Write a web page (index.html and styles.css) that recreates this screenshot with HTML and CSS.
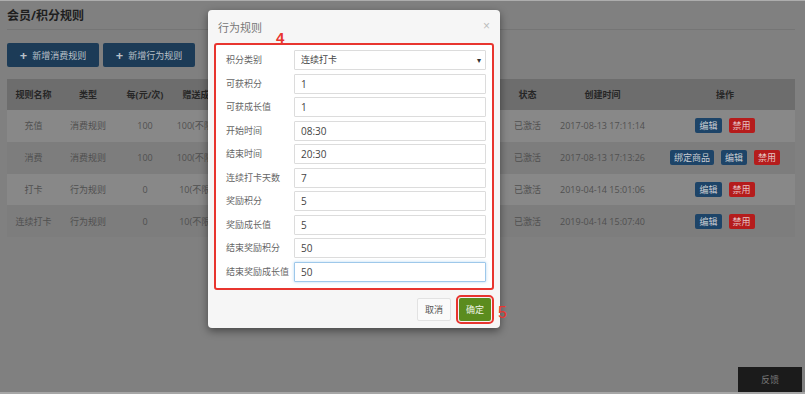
FILE: index.html
```html
<!DOCTYPE html>
<html lang="zh-CN">
<head>
    <meta charset="UTF-8">
    <meta name="viewport" content="width=device-width, initial-scale=1.0">
    <title>会员/积分规则</title>
    <link rel="stylesheet" href="styles.css">
</head>
<body>

    <!-- page behind the modal, drawn in its dimmed colours -->
    <div class="page">
        <h1 class="page-title">会员/积分规则</h1>

        <div class="toolbar">
            <button class="btn-add"><span class="plus">+</span>新增消费规则</button>
            <button class="btn-add"><span class="plus">+</span>新增行为规则</button>
        </div>

        <table class="rules">
            <colgroup>
                <col class="c-name"><col class="c-type"><col class="c-per"><col class="c-grow">
                <col class="c-points"><col class="c-desc"><col class="c-state"><col class="c-time"><col class="c-ops">
            </colgroup>
            <thead>
                <tr>
                    <th>规则名称</th><th>类型</th><th>每(元/次)</th><th>赠送成长值</th>
                    <th>赠送积分</th><th>描述</th><th>状态</th><th>创建时间</th><th>操作</th>
                </tr>
            </thead>
            <tbody>
                <tr>
                    <td>充值</td><td>消费规则</td><td>100</td><td>100(不限次数)</td><td>100</td><td></td>
                    <td>已激活</td><td>2017-08-13 17:11:14</td>
                    <td><div class="ops"><span class="tag tag-blue">编辑</span><span class="tag tag-red">禁用</span></div></td>
                </tr>
                <tr>
                    <td>消费</td><td>消费规则</td><td>100</td><td>100(不限次数)</td><td>100</td><td></td>
                    <td>已激活</td><td>2017-08-13 17:13:26</td>
                    <td><div class="ops"><span class="tag tag-blue">绑定商品</span><span class="tag tag-blue">编辑</span><span class="tag tag-red">禁用</span></div></td>
                </tr>
                <tr>
                    <td>打卡</td><td>行为规则</td><td>0</td><td>10(不限次数)</td><td>10</td><td></td>
                    <td>已激活</td><td>2019-04-14 15:01:06</td>
                    <td><div class="ops"><span class="tag tag-blue">编辑</span><span class="tag tag-red">禁用</span></div></td>
                </tr>
                <tr>
                    <td>连续打卡</td><td>行为规则</td><td>0</td><td>10(不限次数)</td><td>10</td><td></td>
                    <td>已激活</td><td>2019-04-14 15:07:40</td>
                    <td><div class="ops"><span class="tag tag-blue">编辑</span><span class="tag tag-red">禁用</span></div></td>
                </tr>
            </tbody>
        </table>
    </div>

    <div class="feedback">反馈</div>

    <!-- 行为规则 modal -->
    <div class="modal">
        <div class="modal-header">
            <span class="modal-title">行为规则</span>
            <span class="modal-close">×</span>
        </div>
        <span class="mark mark-4">4</span>

        <form class="rule-form">
            <div class="form-row">
                <label>积分类别</label>
                <div class="select-box">连续打卡</div>
            </div>
            <div class="form-row">
                <label>可获积分</label>
                <input type="text" value="1">
            </div>
            <div class="form-row">
                <label>可获成长值</label>
                <input type="text" value="1">
            </div>
            <div class="form-row">
                <label>开始时间</label>
                <input type="text" value="08:30">
            </div>
            <div class="form-row">
                <label>结束时间</label>
                <input type="text" value="20:30">
            </div>
            <div class="form-row">
                <label>连续打卡天数</label>
                <input type="text" value="7">
            </div>
            <div class="form-row">
                <label>奖励积分</label>
                <input type="text" value="5">
            </div>
            <div class="form-row">
                <label>奖励成长值</label>
                <input type="text" value="5">
            </div>
            <div class="form-row">
                <label>结束奖励积分</label>
                <input type="text" value="50">
            </div>
            <div class="form-row">
                <label>结束奖励成长值</label>
                <input type="text" class="focused" value="50">
            </div>
        </form>

        <div class="modal-footer">
            <button class="btn-cancel">取消</button>
            <button class="btn-ok">确定</button>
            <span class="mark mark-5">5</span>
        </div>
    </div>

</body>
</html>
```

FILE: styles.css
```css
body {
    margin: 0;
    min-height: 100vh;
    box-sizing: border-box;
    background-color: #808080;
    border-top: 1px solid #adadad;
    border-bottom: 2px solid #a6a6a6;
    font-family: "Open Sans", "Noto Sans CJK SC", sans-serif;
    color: #505050;
    overflow: hidden;
}
button {
    font-family: inherit;
    border: none;
    cursor: pointer;
}

.page {
    padding: 0 10px 0 7px;
}
.page-title {
    margin: 0;
    padding: 7px 0 5px;
    font-size: 12px;
    line-height: 16px;
    font-weight: bold;
    color: #1e1e1e;
    border-bottom: 1px solid #757575;
}

.toolbar {
    display: flex;
    gap: 4px;
    padding: 13px 0 12px;
}
.btn-add {
    width: 92px;
    height: 24px;
    border-radius: 2px;
    background-color: #1c3b57;
    color: #b9c0c7;
    font-size: 9px;
    display: flex;
    align-items: center;
    justify-content: center;
}
.btn-add .plus {
    font-size: 13px;
    font-weight: bold;
    margin-right: 5px;
    line-height: 12px;
}

/* table */
.rules {
    width: 788px;
    table-layout: fixed;
    border-collapse: collapse;
    font-size: 9px;
}
.c-name { width: 53px; }
.c-type { width: 56px; }
.c-per { width: 58px; }
.c-grow { width: 62px; }
.c-points { width: 94px; }
.c-desc { width: 175px; }
.c-state { width: 45px; }
.c-time { width: 105px; }
.c-ops { width: 140px; }

.rules th {
    height: 31px;
    padding: 0;
    background-color: #6d6d6d;
    color: #262626;
    font-weight: bold;
    text-align: center;
}
.rules td {
    height: 31.75px;
    padding: 0;
    text-align: center;
    white-space: nowrap;
    overflow: hidden;
}
.rules tbody tr:nth-child(odd) { background-color: #888888; }
.rules tbody tr:nth-child(even) { background-color: #7d7d7d; }

.ops {
    display: flex;
    justify-content: center;
    gap: 7px;
}
.tag {
    height: 15px;
    line-height: 15px;
    padding: 0 4px;
    border-radius: 2px;
    color: #c9cdd2;
}
.tag-blue { background-color: #1d4468; }
.tag-red { background-color: #b51c1c; color: #e6c4c4; }

.feedback {
    position: fixed;
    right: 3px;
    bottom: 2px;
    width: 64px;
    height: 25px;
    line-height: 25px;
    text-align: center;
    font-size: 9px;
    color: #777;
    background-color: #1b1b1b;
}

/* modal */
.modal {
    position: absolute;
    left: 208px;
    top: 10px;
    width: 292px;
    background-color: #f6f6f6;
    border-radius: 4px;
    box-shadow: 0 3px 9px rgba(0, 0, 0, 0.45);
}
.modal-header {
    display: flex;
    justify-content: space-between;
    height: 33px;
    box-sizing: border-box;
    padding: 11px 10px 0;
}
.modal-title {
    font-size: 11px;
    line-height: 14px;
    color: #777;
}
.modal-close {
    font-family: "Liberation Sans", sans-serif;
    font-size: 12px;
    line-height: 12px;
    margin-top: -1px;
    color: #bdbdbd;
}

.mark {
    position: absolute;
    font-family: "Liberation Sans", sans-serif;
    color: #e8352f;
}
.mark-4 {
    left: 68px;
    top: 20px;
    font-size: 15px;
    line-height: 15px;
    font-weight: bold;
}
.mark-5 {
    left: 290px;
    top: 295px;
    font-size: 16px;
    line-height: 16px;
}

.rule-form {
    margin: 0 6px;
    padding: 5px 6px 6.5px 10px;
    border: 2px solid #e8352f;
    border-radius: 3px;
    background-color: #fff;
    display: flex;
    flex-direction: column;
    gap: 3.5px;
}
.form-row {
    display: flex;
    align-items: center;
    height: 20px;
}
.form-row label {
    width: 68px;
    flex-shrink: 0;
    font-size: 9px;
    line-height: 12px;
    color: #666;
    white-space: nowrap;
}
.form-row input,
.select-box {
    flex: 1;
    min-width: 0;
    height: 20px;
    box-sizing: border-box;
    margin: 0;
    padding: 0 6px;
    border: 1px solid #dcdcdc;
    border-radius: 1px;
    font-family: inherit;
    font-size: 10px;
    color: #444;
    background-color: #fff;
    outline: none;
}
.select-box {
    position: relative;
    font-size: 9px;
    line-height: 18px;
}
.select-box::after {
    content: "▾";
    position: absolute;
    right: 4px;
    top: 0;
    font-size: 8px;
    color: #333;
}
.form-row input.focused {
    border-color: #9ec8ea;
    box-shadow: 0 0 3px rgba(102, 175, 233, 0.5);
}

.modal-footer {
    display: flex;
    justify-content: flex-end;
    gap: 8px;
    padding: 8px 9px 7px;
}
.btn-cancel,
.btn-ok {
    height: 23px;
    padding: 0 7px;
    border-radius: 2px;
    font-size: 9px;
}
.btn-cancel {
    background-color: #fafafa;
    border: 1px solid #e2e2e2;
    color: #555;
}
.btn-ok {
    background-color: #5b8c1e;
    color: #eef3e6;
    outline: 2px solid #e8352f;
    outline-offset: 1px;
}
```
